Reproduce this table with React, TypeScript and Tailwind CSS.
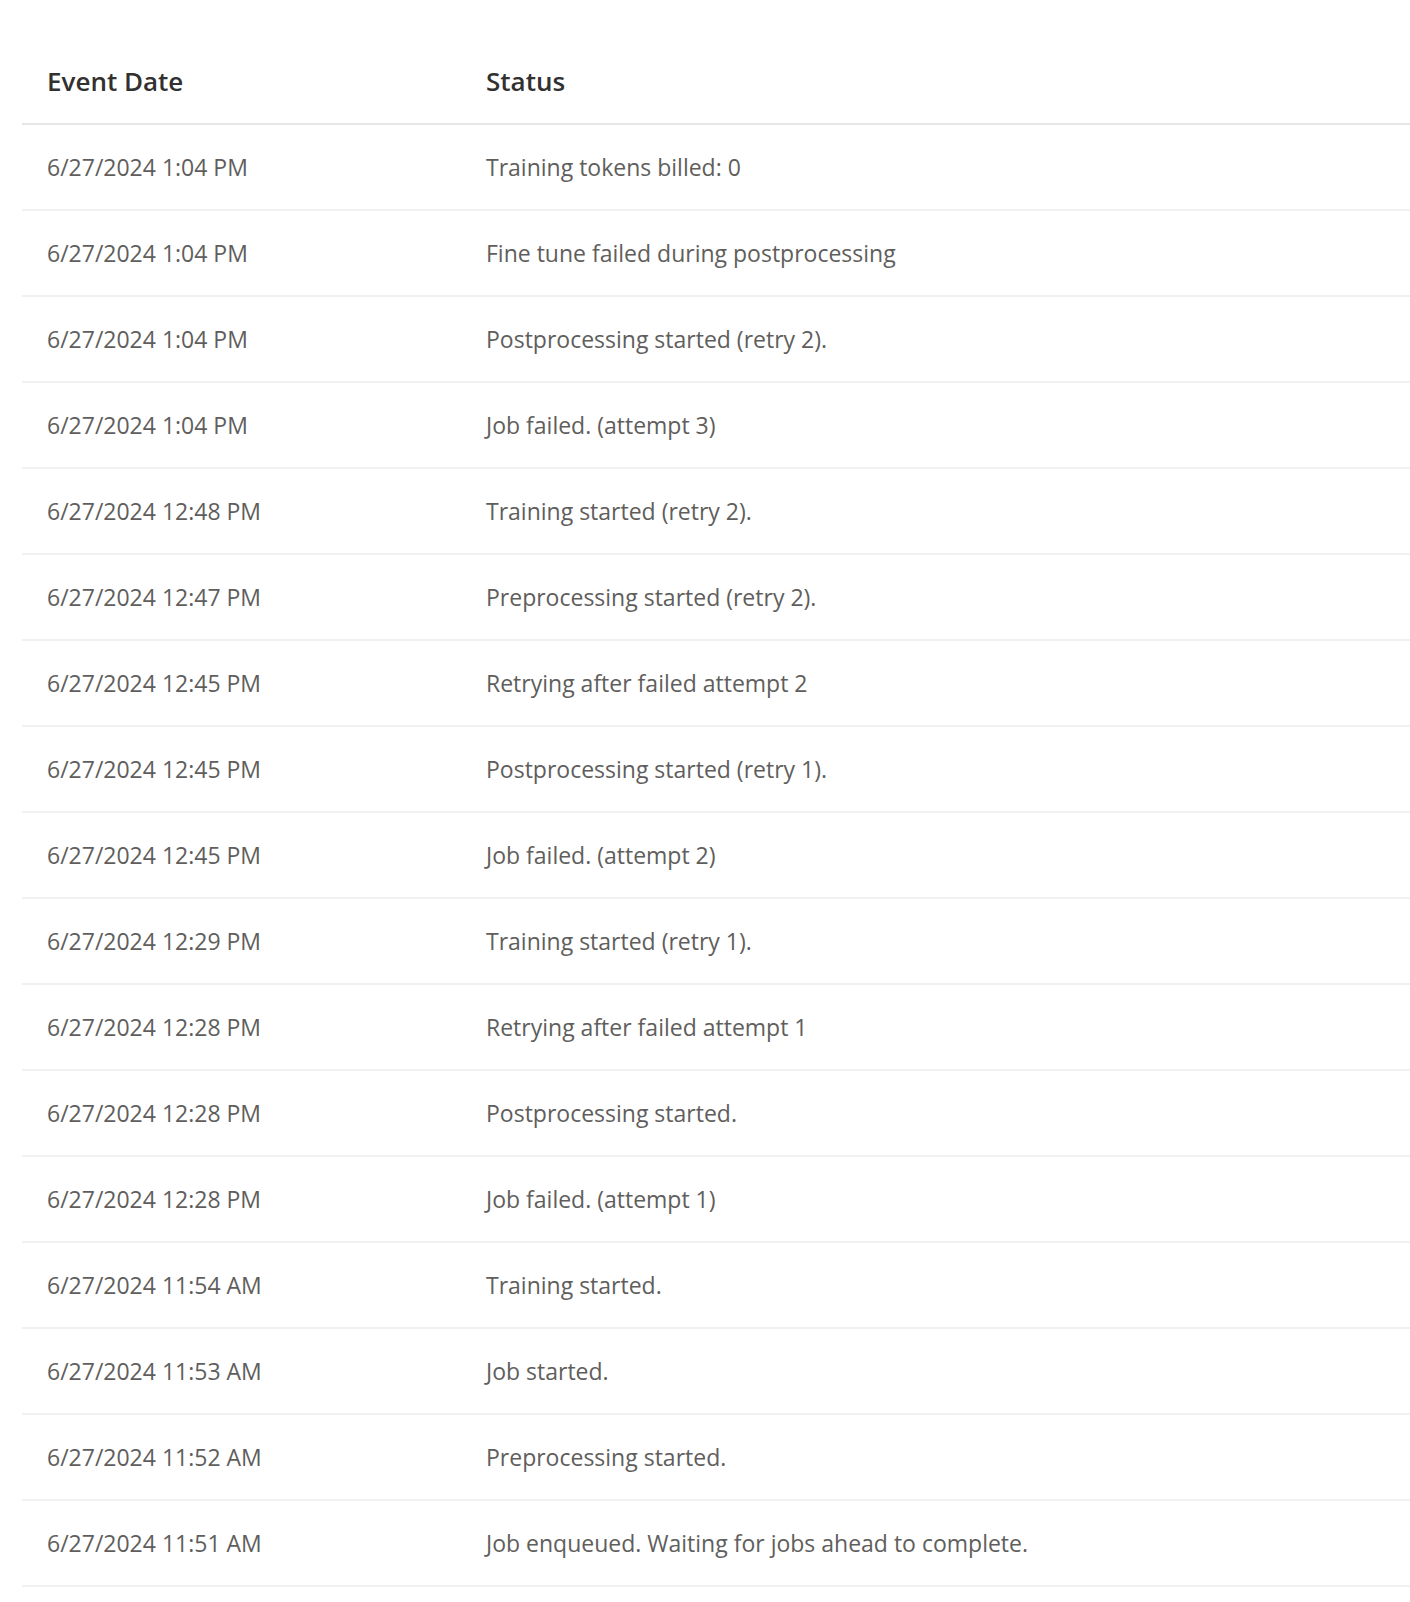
import React from "react";

const rows: [string, string][] = [
  ["6/27/2024 1:04 PM", "Training tokens billed: 0"],
  ["6/27/2024 1:04 PM", "Fine tune failed during postprocessing"],
  ["6/27/2024 1:04 PM", "Postprocessing started (retry 2)."],
  ["6/27/2024 1:04 PM", "Job failed. (attempt 3)"],
  ["6/27/2024 12:48 PM", "Training started (retry 2)."],
  ["6/27/2024 12:47 PM", "Preprocessing started (retry 2)."],
  ["6/27/2024 12:45 PM", "Retrying after failed attempt 2"],
  ["6/27/2024 12:45 PM", "Postprocessing started (retry 1)."],
  ["6/27/2024 12:45 PM", "Job failed. (attempt 2)"],
  ["6/27/2024 12:29 PM", "Training started (retry 1)."],
  ["6/27/2024 12:28 PM", "Retrying after failed attempt 1"],
  ["6/27/2024 12:28 PM", "Postprocessing started."],
  ["6/27/2024 12:28 PM", "Job failed. (attempt 1)"],
  ["6/27/2024 11:54 AM", "Training started."],
  ["6/27/2024 11:53 AM", "Job started."],
  ["6/27/2024 11:52 AM", "Preprocessing started."],
  ["6/27/2024 11:51 AM", "Job enqueued. Waiting for jobs ahead to complete."],
];

export default function App() {
  return (
    <div
      className="min-h-[1602px] bg-white pl-[22px] pt-[39px]"
      style={{ fontFamily: '"Open Sans", "Noto Sans", sans-serif' }}
    >
      <div className="flex flex-col">
        <div className="grid h-[86px] grid-cols-[464px_1fr] items-center border-b-2 border-[#e6e6e6] text-[26px] font-semibold text-[#323130]">
          <div className="pl-[25px]">Event Date</div>
          <div>Status</div>
        </div>
        {rows.map(([d, s], i) => (
          <div
            key={i}
            className="grid h-[86px] grid-cols-[464px_1fr] items-center border-b-2 border-[#f1f1f1] text-[23px] text-[#605e5c]"
          >
            <div className="pl-[25px]">{d}</div>
            <div>{s}</div>
          </div>
        ))}
      </div>
    </div>
  );
}
